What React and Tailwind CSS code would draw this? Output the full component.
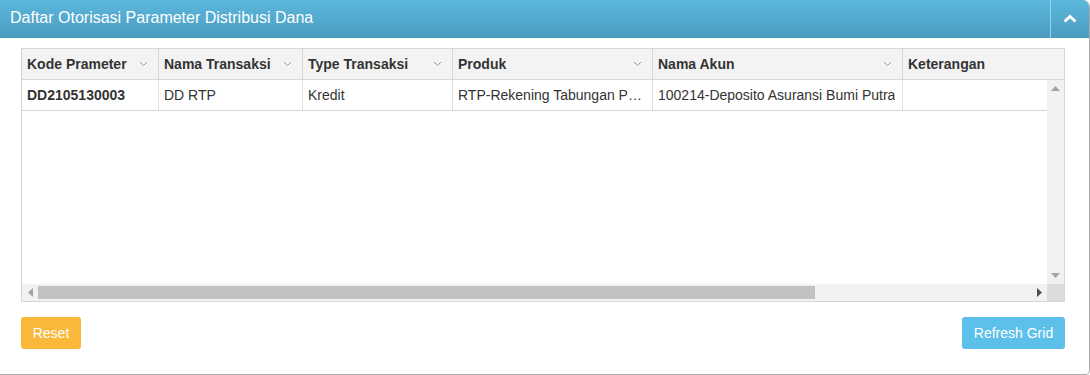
import React from 'react';

const columns = [
    { key: 'kode', label: 'Kode Prameter', width: 'w-[137px]', sort: true },
    { key: 'nama', label: 'Nama Transaksi', width: 'w-[144px]', sort: true },
    { key: 'type', label: 'Type Transaksi', width: 'w-[150px]', sort: true },
    { key: 'produk', label: 'Produk', width: 'w-[200px]', sort: true },
    { key: 'akun', label: 'Nama Akun', width: 'w-[250px]', sort: true },
    { key: 'ket', label: 'Keterangan', width: 'w-[163px]', sort: false },
];

const rows = [
    {
        kode: 'DD2105130003',
        nama: 'DD RTP',
        type: 'Kredit',
        produk: 'RTP-Rekening Tabungan Pensiun',
        akun: '100214-Deposito Asuransi Bumi Putra',
        ket: '',
    },
];

const SortIcon = () => (
    <svg width="9" height="6" viewBox="0 0 9 6" className="shrink-0">
        <path d="M1 1 L4.5 4.5 L8 1" fill="none" stroke="#9a9a9a" strokeWidth="1" />
    </svg>
);

const App = () => {
    return (
        <div className="w-[1090px] h-[375px] bg-white font-['Liberation_Sans',Arial,sans-serif]">
            <div className="h-[375px] flex flex-col border-r border-b border-[#a9a9a9] rounded-tr-[7px] rounded-br-[5px] overflow-hidden">
                {/* Panel header */}
                <div className="h-[38px] flex items-stretch bg-gradient-to-b from-[#5cb7dc] to-[#4a9cc0]">
                    <div className="flex-1 flex items-center pl-[10px] pb-[3px] text-white text-[16px]">
                        Daftar Otorisasi Parameter Distribusi Dana
                    </div>
                    <div className="w-[39px] border-l border-[#8fd3ee] flex items-center justify-center pb-[1px]">
                        <svg width="14" height="9" viewBox="0 0 14 9">
                            <path d="M1.5 7.5 L7 2.5 L12.5 7.5" fill="none" stroke="#ffffff" strokeWidth="3" />
                        </svg>
                    </div>
                </div>

                {/* Body */}
                <div className="flex-1 flex flex-col pl-[21px] pr-[24px] pt-[10px]">
                    {/* Grid */}
                    <div className="h-[254px] flex flex-col border border-[#d6d6d6] text-[14px] text-[#333]">
                        <div className="h-[31px] flex bg-[#f3f3f3] border-b border-[#d6d6d6] overflow-hidden shrink-0">
                            {columns.map((col, idx) => (
                                <div
                                    key={col.key}
                                    className={`${col.width} shrink-0 flex items-center justify-between pl-[5px] pr-[10px] font-bold ${idx < columns.length - 1 ? 'border-r border-[#d6d6d6]' : ''}`}
                                >
                                    <span className="whitespace-nowrap">{col.label}</span>
                                    {col.sort && <SortIcon />}
                                </div>
                            ))}
                        </div>

                        <div className="flex-1 flex min-h-0">
                            <div className="flex-1 bg-white overflow-hidden">
                                {rows.map((row) => (
                                    <div key={row.kode} className="h-[31px] flex border-b border-[#d6d6d6]">
                                        {columns.map((col, idx) => (
                                            <div
                                                key={col.key}
                                                className={`${col.width} shrink-0 flex items-center px-[5px] ${idx < columns.length - 1 ? 'border-r border-[#e0e0e0]' : ''} ${idx === 0 ? 'font-bold' : ''}`}
                                            >
                                                <span className="truncate">{row[col.key]}</span>
                                            </div>
                                        ))}
                                    </div>
                                ))}
                            </div>
                            {/* vertical scrollbar */}
                            <div className="w-[17px] bg-[#f1f1f1] flex flex-col justify-between items-center py-[6px]">
                                <svg width="9" height="5" viewBox="0 0 9 5">
                                    <path d="M0 5 L4.5 0 L9 5 Z" fill="#a3a3a3" />
                                </svg>
                                <svg width="9" height="5" viewBox="0 0 9 5">
                                    <path d="M0 0 L4.5 5 L9 0 Z" fill="#a3a3a3" />
                                </svg>
                            </div>
                        </div>

                        {/* horizontal scrollbar */}
                        <div className="h-[17px] flex shrink-0">
                            <div className="flex-1 bg-[#f1f1f1] flex items-center">
                                <div className="w-[16px] flex items-center justify-center">
                                    <svg width="5" height="9" viewBox="0 0 5 9">
                                        <path d="M5 0 L0 4.5 L5 9 Z" fill="#a3a3a3" />
                                    </svg>
                                </div>
                                <div className="w-[777px] h-[13px] bg-[#c1c1c1]" />
                                <div className="flex-1" />
                                <div className="w-[16px] flex items-center justify-center">
                                    <svg width="5" height="9" viewBox="0 0 5 9">
                                        <path d="M0 0 L5 4.5 L0 9 Z" fill="#505050" />
                                    </svg>
                                </div>
                            </div>
                            <div className="w-[17px] bg-[#dcdcdc]" />
                        </div>
                    </div>

                    {/* Buttons */}
                    <div className="flex justify-between mt-[15px]">
                        <button className="w-[60px] h-[32px] rounded-[3px] bg-[#f9b83a] text-white text-[14px]">
                            Reset
                        </button>
                        <button className="w-[103px] h-[32px] rounded-[3px] bg-[#5dc0ea] text-white text-[14px]">
                            Refresh Grid
                        </button>
                    </div>
                </div>
            </div>
        </div>
    );
};

export default App;
